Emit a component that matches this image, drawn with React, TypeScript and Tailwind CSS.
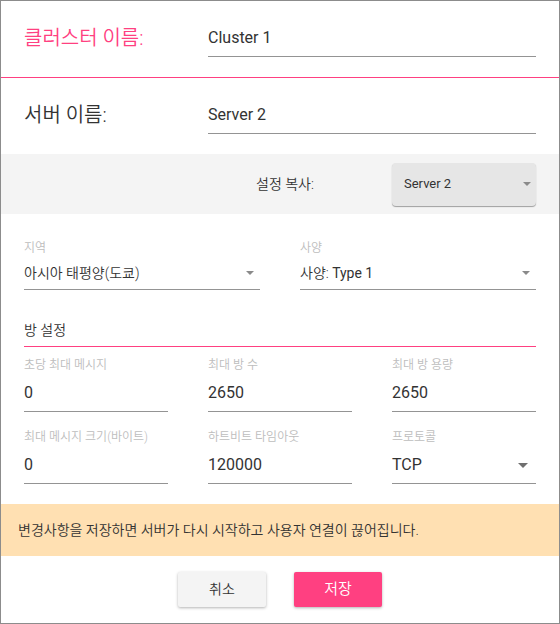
const font = "font-['Roboto','Noto_Sans_CJK_KR',sans-serif]";

function Arrow({ small }: { small?: boolean }) {
  return small ? (
    <span className="inline-block h-0 w-0 border-x-[4px] border-t-[4px] border-x-transparent border-t-[#8a8a8a]" />
  ) : (
    <span className="inline-block h-0 w-0 border-x-[5px] border-t-[5px] border-x-transparent border-t-[#6f6f6f]" />
  );
}

function NumField({ label, value, select }: { label: string; value: string; select?: boolean }) {
  return (
    <div>
      <div className="text-[12px] font-[350] leading-[16px] text-[#bdbdbd]">{label}</div>
      <div className="flex items-center justify-between border-b border-[#949494] pt-[8px] pb-[6px] text-[16px] leading-[24px] text-[#333]">
        <span>{value}</span>
        {select && (
          <span className="mr-[8px] flex items-center">
            <Arrow />
          </span>
        )}
      </div>
    </div>
  );
}

function SelectField({ label, children }: { label: string; children: React.ReactNode }) {
  return (
    <div>
      <div className="text-[12px] font-[350] leading-[16px] text-[#bdbdbd]">{label}</div>
      <div className="flex items-center justify-between border-b border-[#949494] pt-[5px] pb-[4px] text-[14px] font-[350] leading-[24px] text-[#333]">
        <span>{children}</span>
        <span className="mr-[6px] flex items-center">
          <Arrow small />
        </span>
      </div>
    </div>
  );
}

export default function App() {
  return (
    <div className={`${font} flex h-[624px] w-[560px] flex-col overflow-hidden border border-[#8c8c8c] bg-white`}>
      {/* Cluster name */}
      <div className="flex h-[77px] shrink-0 border-b border-[#ff4081] px-[23px]">
        <div className="mt-[25px] w-[184px] text-[20px] font-[350] leading-[24px] text-[#ff4081]">클러스터 이름:</div>
        <div className="mt-[26px] h-[30px] flex-1 border-b border-[#949494] text-[16px] leading-[22px] text-[#333]">
          Cluster 1
        </div>
      </div>

      {/* Server name */}
      <div className="flex h-[76px] shrink-0 px-[23px]">
        <div className="mt-[25px] w-[184px] text-[20px] font-[350] leading-[24px] text-[#333]">서버 이름:</div>
        <div className="mt-[26px] h-[30px] flex-1 border-b border-[#949494] text-[16px] leading-[22px] text-[#333]">
          Server 2
        </div>
      </div>

      {/* Copy settings */}
      <div className="flex h-[60px] shrink-0 items-center justify-end bg-[#f4f4f4] pr-[23px]">
        <div className="w-[136px] text-[14px] font-[350] text-[#333]">설정 복사:</div>
        <div className="flex h-[43px] w-[144px] items-center justify-between rounded-[4px] bg-[#e6e6e6] pl-[12px] pr-[5px] text-[13px] text-[#333] shadow-[0_1px_1px_rgba(0,0,0,0.35)]">
          <span>Server 2</span>
          <Arrow small />
        </div>
      </div>

      {/* Region / spec */}
      <div className="px-[23px]">
        <div className="grid grid-cols-2 gap-x-10 pt-[26px]">
          <SelectField label="지역">아시아 태평양(도쿄)</SelectField>
          <SelectField label="사양">
            사양: <span className="font-normal">Type 1</span>
          </SelectField>
        </div>

        <div className="mt-[30px] border-b border-[#ff4081] pb-[6px] text-[14px] font-[350] leading-[20px] text-[#333]">방 설정</div>

        <div className="mt-[10px] grid grid-cols-3 gap-x-10">
          <NumField label="초당 최대 메시지" value="0" />
          <NumField label="최대 방 수" value="2650" />
          <NumField label="최대 방 용량" value="2650" />
        </div>
        <div className="mt-[17px] grid grid-cols-3 gap-x-10">
          <NumField label="최대 메시지 크기(바이트)" value="0" />
          <NumField label="하트비트 타임아웃" value="120000" />
          <NumField label="프로토콜" value="TCP" select />
        </div>
      </div>

      {/* Warning */}
      <div className="mt-[20px] flex h-[52px] shrink-0 items-center bg-[#ffe0b2] px-[17px] text-[14px] font-[350] text-[#333]">
        변경사항을 저장하면 서버가 다시 시작하고 사용자 연결이 끊어집니다.
      </div>

      {/* Buttons */}
      <div className="mt-[16px] flex justify-center gap-7">
        <button className="h-[35px] w-[88px] rounded-[2px] bg-[#f4f4f4] text-[14px] font-[350] text-[#333] shadow-[0_1px_3px_rgba(0,0,0,0.3)]">
          취소
        </button>
        <button className="h-[35px] w-[88px] rounded-[2px] bg-[#ff4081] text-[15px] font-[350] text-white shadow-[0_1px_3px_rgba(0,0,0,0.3)]">
          저장
        </button>
      </div>
    </div>
  );
}
